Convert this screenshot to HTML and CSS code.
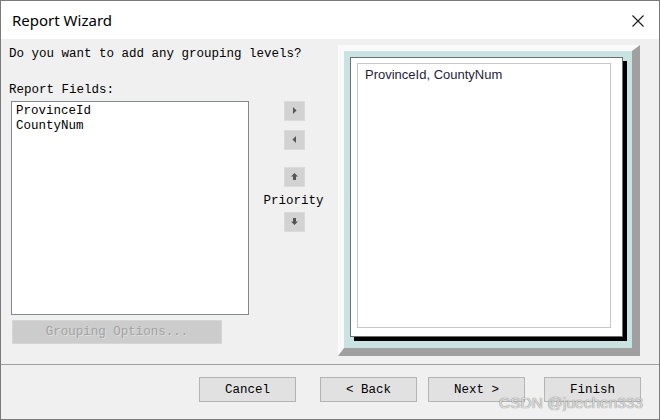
FILE: index.html
```html
<!DOCTYPE html>
<html>
<head>
<meta charset="utf-8">
<link rel="stylesheet" href="styles.css">
</head>
<body>
<div class="window">
  <div class="titlebar">
    <span class="title">Report Wizard</span>
    <svg class="close" width="12" height="12" viewBox="0 0 12 12"><path d="M0.5 0.5L11.5 11.5M11.5 0.5L0.5 11.5" stroke="#1a1a1a" stroke-width="1.1" fill="none"/></svg>
  </div>
  <div class="main">
    <div class="left">
      <div class="prompt">Do you want to add any grouping levels?</div>
      <div class="label">Report Fields:</div>
      <div class="listbox">
        <div class="item">ProvinceId</div>
        <div class="item">CountyNum</div>
      </div>
      <button class="grp" disabled>Grouping Options...</button>
    </div>
    <div class="mid">
      <button class="arrow"><svg width="21" height="20" viewBox="0 0 21 20"><polygon points="9,6 9,13 12.5,9.5" fill="#555"/></svg></button>
      <button class="arrow second"><svg width="21" height="20" viewBox="0 0 21 20"><polygon points="12,6 12,13 8.5,9.5" fill="#555"/></svg></button>
      <button class="arrow third"><svg width="21" height="20" viewBox="0 0 21 20"><polygon points="10.5,6 14,9.5 12,9.5 12,13 9,13 9,9.5 7,9.5" fill="#555"/></svg></button>
      <div class="priority">Priority</div>
      <button class="arrow fourth"><svg width="21" height="20" viewBox="0 0 21 20"><polygon points="10.5,13 14,9.5 12,9.5 12,6 9,6 9,9.5 7,9.5" fill="#555"/></svg></button>
    </div>
    <div class="frame">
      <div class="panel">
        <div class="inner">ProvinceId, CountyNum</div>
      </div>
    </div>
  </div>
  <div class="footer">
    <button class="btn cancel">Cancel</button>
    <button class="btn back">&lt; Back</button>
    <button class="btn next">Next &gt;</button>
    <button class="btn">Finish</button>
  </div>
  <div class="watermark">CSDN @juechen333</div>
</div>
</body>
</html>
```
FILE: styles.css
```css
html, body {
  margin: 0;
  padding: 0;
  background: #f0f0f0;
}
.window {
  position: relative;
  width: 660px;
  height: 420px;
  box-sizing: border-box;
  border: 1px solid #7a7a7a;
  background: #f0f0f0;
  font-family: "Liberation Mono", monospace;
  font-size: 12.5px;
  line-height: 15px;
  color: #000;
  overflow: hidden;
}
.titlebar {
  height: 38px;
  background: #fff;
  display: flex;
  align-items: center;
  justify-content: space-between;
  padding: 0 15px 0 11px;
}
.title {
  font-family: "Noto Sans", sans-serif;
  font-size: 15px;
  color: #000;
  margin-top: 1px;
}
.close {
  display: block;
  margin-top: 1px;
}
.main {
  height: 325px;
  display: flex;
  align-items: flex-start;
}
.left {
  width: 240px;
  margin-left: 8px;
  padding-top: 8px;
  display: flex;
  flex-direction: column;
  align-items: flex-start;
}
.prompt {
  white-space: nowrap;
}
.label {
  margin-top: 21px;
}
.listbox {
  margin-top: 3px;
  margin-left: 2px;
  width: 238px;
  height: 214px;
  box-sizing: border-box;
  border: 1px solid #828790;
  background: #fff;
  padding: 2px 0 0 4px;
}
.grp {
  margin: 5px 0 0 3px;
  width: 210px;
  height: 24px;
  box-sizing: border-box;
  border: 1px solid #d6d6d6;
  background: #cccccc;
  font-family: "Liberation Mono", monospace;
  font-size: 12.5px;
  color: #a3a3a3;
  text-shadow: 1px 1px 0 #dedede;
  padding: 0;
}
.mid {
  width: 89px;
  padding-top: 62px;
  display: flex;
  flex-direction: column;
  align-items: center;
}
.arrow {
  width: 21px;
  height: 20px;
  padding: 0;
  box-sizing: border-box;
  border: 1px solid #dadada;
  background: #d2d2d2;
  display: block;
  margin-left: 1px;
}
.arrow svg {
  display: block;
  margin: -1px;
}
.arrow.second {
  margin-top: 9px;
}
.arrow.third {
  margin-top: 17px;
}
.priority {
  margin-top: 7px;
}
.arrow.fourth {
  margin-top: 3px;
}
.frame {
  margin-top: 6px;
  width: 302px;
  height: 311px;
  box-sizing: border-box;
  border-style: solid;
  border-width: 6px 8px 8px 6px;
  border-color: #fafafa #a0a0a0 #a0a0a0 #fafafa;
  background: #c9e2e2;
  padding: 6px 0 0 6px;
}
.panel {
  width: 273px;
  height: 280px;
  box-sizing: border-box;
  border: 1px solid #6e6e6e;
  background: #fff;
  box-shadow: 4px 4px 0 #000;
  padding: 5px 0 0 6px;
}
.inner {
  width: 254px;
  height: 265px;
  box-sizing: border-box;
  border: 1px solid #c8c8c8;
  padding: 3px 0 0 7px;
  font-family: "Liberation Sans", Arial, sans-serif;
  font-size: 13px;
  line-height: 15px;
  color: #1e1e3c;
}
.footer {
  border-top: 1px solid #a0a0a0;
  height: 54px;
  box-sizing: border-box;
  display: flex;
  justify-content: flex-end;
  align-items: flex-start;
  padding: 12px 18px 0 0;
}
.btn {
  width: 97px;
  height: 25px;
  box-sizing: border-box;
  border: 1px solid #b4b4b4;
  background: #e1e1e1;
  font-family: "Liberation Mono", monospace;
  font-size: 12.5px;
  color: #000;
  padding: 0;
}
.cancel {
  margin-right: 24px;
}
.back {
  margin-right: 11px;
}
.next {
  margin-right: 19px;
}
.watermark {
  position: absolute;
  left: 498px;
  top: 393px;
  font-family: "Liberation Sans", Arial, sans-serif;
  font-size: 15.5px;
  line-height: 18px;
  color: rgba(240, 240, 240, 0.85);
  text-shadow: 0 0 1px rgba(60, 60, 60, 0.9);
  white-space: nowrap;
}
```
